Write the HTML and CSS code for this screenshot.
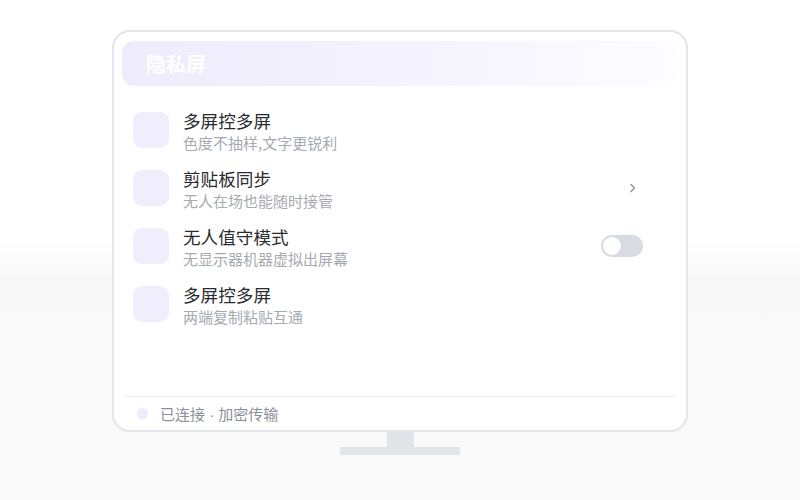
FILE: index.html
```html
<!DOCTYPE html>
<html lang="zh-CN">
<head>
<meta charset="utf-8">
<link rel="stylesheet" href="styles.css">
</head>
<body>
<div class="stage">
  <div class="monitor">
    <div class="header"><span class="header-title">隐私屏</span></div>
    <div class="list">
      <div class="row">
        <div class="row-icon"></div>
        <div class="row-text">
          <div class="row-title">多屏控多屏</div>
          <div class="row-sub">色度不抽样,文字更锐利</div>
        </div>
      </div>
      <div class="row">
        <div class="row-icon"></div>
        <div class="row-text">
          <div class="row-title">剪贴板同步</div>
          <div class="row-sub">无人在场也能随时接管</div>
        </div>
        <svg class="chevron" width="8" height="12" viewBox="0 0 8 12"><path d="M2 2.5 L5.5 6 L2 9.5" fill="none" stroke="#8a8f99" stroke-width="1.4" stroke-linecap="round" stroke-linejoin="round"/></svg>
      </div>
      <div class="row">
        <div class="row-icon"></div>
        <div class="row-text">
          <div class="row-title">无人值守模式</div>
          <div class="row-sub">无显示器机器虚拟出屏幕</div>
        </div>
        <div class="toggle"><div class="knob"></div></div>
      </div>
      <div class="row">
        <div class="row-icon"></div>
        <div class="row-text">
          <div class="row-title">多屏控多屏</div>
          <div class="row-sub">两端复制粘贴互通</div>
        </div>
      </div>
    </div>
    <div class="footer">
      <span class="dot"></span>
      <span class="footer-text">已连接<span class="sep"> · </span>加密传输</span>
    </div>
  </div>
  <div class="neck"></div>
  <div class="base"></div>
</div>
</body>
</html>
```

FILE: styles.css
```css
html, body {
  margin: 0;
  padding: 0;
}
body {
  width: 800px;
  height: 500px;
  background: linear-gradient(to bottom, #ffffff 0px, #ffffff 240px, #f8f8f9 280px, #fafafa 500px);
  font-family: "Noto Sans CJK SC", "Noto Sans", sans-serif;
  overflow: hidden;
}
.stage {
  display: flex;
  flex-direction: column;
  align-items: center;
  padding-top: 30px;
}
.monitor {
  box-sizing: border-box;
  width: 576px;
  height: 402px;
  border: 2px solid #e3e5ea;
  border-radius: 18px;
  background: #ffffff;
  padding: 9px 9px 0 8px;
  display: flex;
  flex-direction: column;
}
.header {
  height: 45px;
  border-radius: 12px;
  background: linear-gradient(90deg, #eeebfc 0%, #f4f2fd 45%, #fdfcff 100%);
  display: flex;
  align-items: center;
  padding-left: 24px;
}
.header-title {
  color: #ffffff;
  font-size: 20px;
  font-weight: 700;
  line-height: 1;
}
.list {
  flex: 1;
  display: flex;
  flex-direction: column;
  gap: 22px;
  padding: 26px 34px 0 11px;
}
.row {
  display: flex;
  align-items: center;
  height: 36px;
}
.row-icon {
  width: 36px;
  height: 36px;
  border-radius: 9px;
  background: #f0eefc;
  flex: none;
}
.row-text {
  flex: 1;
  margin-left: 14px;
  margin-top: 4px;
  display: flex;
  flex-direction: column;
}
.row-title {
  font-size: 17.6px;
  line-height: 22px;
  color: #2a2b2f;
}
.row-sub {
  font-size: 15px;
  line-height: 22px;
  color: #a6aab1;
}
.chevron {
  margin-right: 6px;
}
.toggle {
  width: 42px;
  height: 22px;
  border-radius: 11px;
  background: #d8dbe1;
  position: relative;
}
.knob {
  position: absolute;
  left: 2px;
  top: 2px;
  width: 18px;
  height: 18px;
  border-radius: 50%;
  background: #ffffff;
}
.footer {
  height: 33px;
  margin: 0 2px 0 2px;
  border-top: 1px solid #eceef1;
  display: flex;
  align-items: center;
  padding-left: 13px;
}
.dot {
  width: 11px;
  height: 11px;
  border-radius: 50%;
  background: #ecebfb;
}
.footer-text {
  margin-left: 12px;
  font-size: 15px;
  color: #8c9098;
}
.sep {
  font-family: "Liberation Sans", sans-serif;
}
.neck {
  width: 27px;
  height: 15px;
  background: #e1e4e9;
}
.base {
  width: 120px;
  height: 8px;
  background: #e1e4e9;
}
```
